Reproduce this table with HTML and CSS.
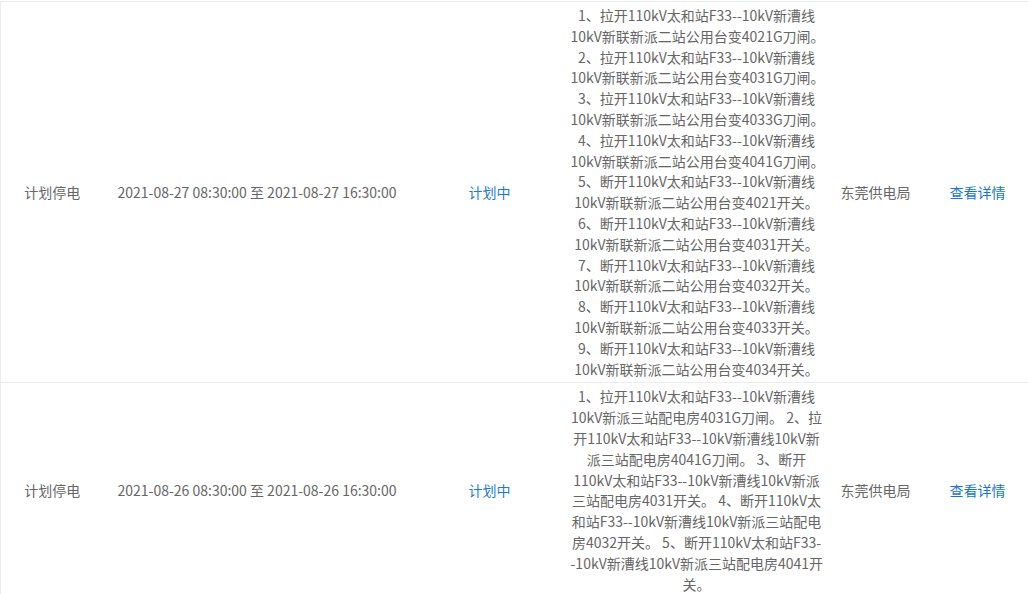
FILE: index.html
```html
<!DOCTYPE html>
<html lang="zh-CN">
<head>
<meta charset="UTF-8" />
<meta name="viewport" content="width=device-width, initial-scale=1.0" />
<title>停电信息</title>
<link rel="stylesheet" href="styles.css">
</head>
<body>

<div class="list">
  <table class="outage-table">
    <colgroup>
      <col class="c-type" />
      <col class="c-time" />
      <col class="c-state" />
      <col class="c-range" />
      <col class="c-org" />
      <col class="c-op" />
    </colgroup>
    <tbody>
      <!-- 第一条 -->
      <tr>
        <td>计划停电</td>
        <td>2021-08-27 08:30:00 至 2021-08-27 16:30:00</td>
        <td class="state">计划中</td>
        <td class="range">
          <div>1、拉开110kV太和站F33--10kV新漕线<br>10kV新联新派二站公用台变4021G刀闸。</div>
          <div>2、拉开110kV太和站F33--10kV新漕线<br>10kV新联新派二站公用台变4031G刀闸。</div>
          <div>3、拉开110kV太和站F33--10kV新漕线<br>10kV新联新派二站公用台变4033G刀闸。</div>
          <div>4、拉开110kV太和站F33--10kV新漕线<br>10kV新联新派二站公用台变4041G刀闸。</div>
          <div>5、断开110kV太和站F33--10kV新漕线<br>10kV新联新派二站公用台变4021开关。</div>
          <div>6、断开110kV太和站F33--10kV新漕线<br>10kV新联新派二站公用台变4031开关。</div>
          <div>7、断开110kV太和站F33--10kV新漕线<br>10kV新联新派二站公用台变4032开关。</div>
          <div>8、断开110kV太和站F33--10kV新漕线<br>10kV新联新派二站公用台变4033开关。</div>
          <div>9、断开110kV太和站F33--10kV新漕线<br>10kV新联新派二站公用台变4034开关。</div>
        </td>
        <td>东莞供电局</td>
        <td><a class="detail" href="#">查看详情</a></td>
      </tr>
      <!-- 第二条 -->
      <tr>
        <td>计划停电</td>
        <td>2021-08-26 08:30:00 至 2021-08-26 16:30:00</td>
        <td class="state">计划中</td>
        <td class="range">
          1、拉开110kV太和站F33--10kV新漕线<br>10kV新派三站配电房4031G刀闸。 2、拉<br>开110kV太和站F33--10kV新漕线10kV新<br>派三站配电房4041G刀闸。 3、断开<br>110kV太和站F33--10kV新漕线10kV新派<br>三站配电房4031开关。 4、断开110kV太<br>和站F33--10kV新漕线10kV新派三站配电<br>房4032开关。 5、断开110kV太和站F33-<br>-10kV新漕线10kV新派三站配电房4041开<br>关。
        </td>
        <td>东莞供电局</td>
        <td><a class="detail" href="#">查看详情</a></td>
      </tr>
    </tbody>
  </table>
</div>

</body>
</html>
```

FILE: styles.css
```css
body {
  margin: 0;
  padding: 0;
  background: #fff;
  font-family: "Noto Sans CJK SC", "Noto Sans", sans-serif;
  font-size: 14px;
  color: #666;
}
.list {
  padding-top: 1px;
}
.outage-table {
  width: 1028px;
  table-layout: fixed;
  border-collapse: collapse;
  border-top: 1px solid #ebedf0;
  border-left: 1px solid #ebedf0;
}
.c-type { width: 103px; }
.c-time { width: 307px; }
.c-state { width: 158px; }
.c-range { width: 256px; }
.c-org { width: 102px; }
.c-op { width: 102px; }
.outage-table td {
  padding: 3px 2px;
  text-align: center;
  vertical-align: middle;
  line-height: 20.8px;
  border-bottom: 1px solid #ebedf0;
  white-space: nowrap;
}
.outage-table .state {
  color: #1a7bd0;
}
.detail {
  color: #1676d2;
  text-decoration: none;
}
```
